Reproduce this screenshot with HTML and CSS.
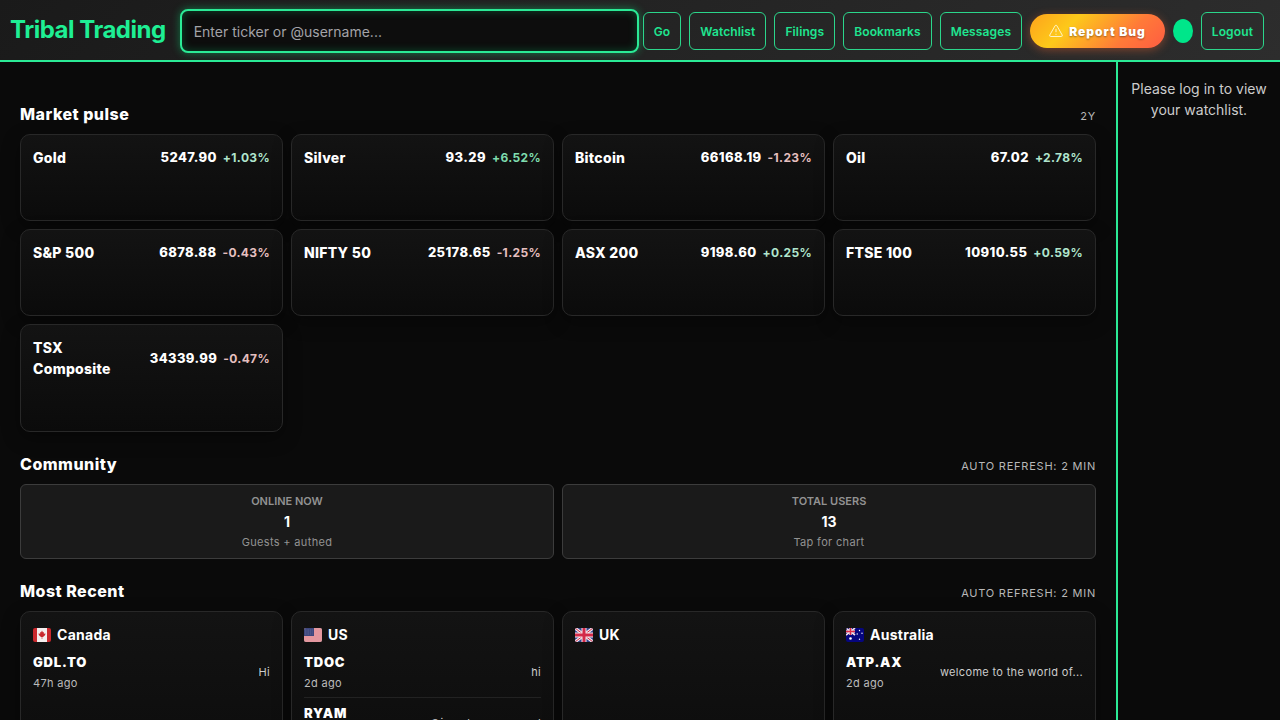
FILE: index.html
```html
<!DOCTYPE html>
<html lang="en">
<head>
  <meta charset="UTF-8">
  <meta name="viewport" content="width=device-width, initial-scale=1.0">
  <title>Tribal Trading</title>
  <link rel="stylesheet" href="styles.css">
</head>
<body>
  <header class="topbar">
    <h1 class="logo">Tribal Trading</h1>
    <form class="search">
      <input type="text" class="search-input" aria-label="Search" placeholder="Enter ticker or @username...">
      <button type="submit" class="btn">Go</button>
    </form>
    <nav class="nav">
      <button type="button" class="btn">Watchlist</button>
      <button type="button" class="btn">Filings</button>
      <button type="button" class="btn">Bookmarks</button>
      <button type="button" class="btn">Messages</button>
      <button type="button" class="btn-bug">
        <svg class="bug-icon" viewBox="0 0 14 14" aria-hidden="true">
          <path d="M6.2 1.6 Q7 .5 7.8 1.6 L13.2 11 Q13.7 12.5 12.3 12.5 H1.7 Q.3 12.5 .8 11 Z M7 4.8 V8.2 M7 9.8 V10.8"/>
        </svg>
        Report Bug
      </button>
      <button type="button" class="avatar" aria-label="Profile"></button>
      <button type="button" class="btn">Logout</button>
    </nav>
  </header>

  <div class="layout">
    <main class="main">
      <section class="section">
        <div class="section-head">
          <h2>Market pulse</h2>
          <span class="meta">2Y</span>
        </div>
        <div class="grid">
          <div class="card"><div class="quote"><span class="name">Gold</span><span class="price">5247.90</span><span class="change up">+1.03%</span></div><div class="spark"></div></div>
          <div class="card"><div class="quote"><span class="name">Silver</span><span class="price">93.29</span><span class="change up-strong">+6.52%</span></div><div class="spark"></div></div>
          <div class="card"><div class="quote"><span class="name">Bitcoin</span><span class="price">66168.19</span><span class="change down">-1.23%</span></div><div class="spark"></div></div>
          <div class="card"><div class="quote"><span class="name">Oil</span><span class="price">67.02</span><span class="change up">+2.78%</span></div><div class="spark"></div></div>
          <div class="card"><div class="quote"><span class="name">S&amp;P 500</span><span class="price">6878.88</span><span class="change down">-0.43%</span></div><div class="spark"></div></div>
          <div class="card"><div class="quote"><span class="name">NIFTY 50</span><span class="price">25178.65</span><span class="change down">-1.25%</span></div><div class="spark"></div></div>
          <div class="card"><div class="quote"><span class="name">ASX 200</span><span class="price">9198.60</span><span class="change up">+0.25%</span></div><div class="spark"></div></div>
          <div class="card"><div class="quote"><span class="name">FTSE 100</span><span class="price">10910.55</span><span class="change up">+0.59%</span></div><div class="spark"></div></div>
          <div class="card"><div class="quote"><span class="name">TSX<br>Composite</span><span class="price">34339.99</span><span class="change down">-0.47%</span></div><div class="spark"></div></div>
        </div>
      </section>

      <section class="section">
        <div class="section-head">
          <h2>Community</h2>
          <span class="meta">AUTO REFRESH: 2 MIN</span>
        </div>
        <div class="stats">
          <button type="button" class="stat">
            <span class="stat-label">ONLINE NOW</span>
            <span class="stat-value">1</span>
            <span class="stat-note">Guests + authed</span>
          </button>
          <button type="button" class="stat">
            <span class="stat-label">TOTAL USERS</span>
            <span class="stat-value">13</span>
            <span class="stat-note">Tap for chart</span>
          </button>
        </div>
      </section>

      <section class="section">
        <div class="section-head">
          <h2>Most Recent</h2>
          <span class="meta">AUTO REFRESH: 2 MIN</span>
        </div>
        <div class="grid">
          <div class="card recent">
            <h3 class="country">
              <svg class="flag" viewBox="0 0 18 14" aria-hidden="true">
                <rect width="18" height="14" fill="#c9282d"/>
                <rect x="4" width="10" height="14" fill="#f4eeee"/>
                <path d="M9 2.5 L10 4.4 L11 4 L10.8 5.8 L12.6 5.6 L12 7.2 L10 9 H9.3 V11 H8.7 V9 H8 L6 7.2 L5.4 5.6 L7.2 5.8 L7 4 L8 4.4 Z" fill="#c9282d"/>
              </svg>
              Canada
            </h3>
            <div class="post">
              <div><div class="ticker">GDL.TO</div><div class="time">47h ago</div></div>
              <p class="message">Hi</p>
            </div>
          </div>
          <div class="card recent">
            <h3 class="country">
              <svg class="flag" viewBox="0 0 18 14" aria-hidden="true">
                <rect width="18" height="14" fill="#f2dfe2"/>
                <path d="M0 1 H18 M0 3 H18 M0 5 H18 M0 7 H18 M0 9 H18 M0 11 H18 M0 13 H18" stroke="#d5505d"/>
                <rect width="10" height="8" fill="#3c467d"/>
                <path d="M1 2 H9 M1 4 H9 M1 6 H9" stroke="#8d94b8" stroke-width=".6" stroke-dasharray=".7 1"/>
              </svg>
              US
            </h3>
            <div class="post">
              <div><div class="ticker">TDOC</div><div class="time">2d ago</div></div>
              <p class="message">hi</p>
            </div>
            <div class="post">
              <div><div class="ticker">RYAM</div><div class="time">2d ago</div></div>
              <p class="message">@jean keeps on and</p>
            </div>
          </div>
          <div class="card recent">
            <h3 class="country">
              <svg class="flag" viewBox="0 0 18 14" aria-hidden="true">
                <rect width="18" height="14" fill="#33438c"/>
                <path d="M0 0 L18 14 M18 0 L0 14" stroke="#f5e6ea" stroke-width="3"/>
                <path d="M0 0 L18 14 M18 0 L0 14" stroke="#d32b49"/>
                <path d="M9 0 V14 M0 7 H18" stroke="#f5e6ea" stroke-width="5"/>
                <path d="M9 0 V14 M0 7 H18" stroke="#d32b49" stroke-width="3"/>
              </svg>
              UK
            </h3>
          </div>
          <div class="card recent">
            <h3 class="country">
              <svg class="flag" viewBox="0 0 18 14" aria-hidden="true">
                <rect width="18" height="14" fill="#06067f"/>
                <path d="M0 0 L9 7 M9 0 L0 7" stroke="#f3dfe7" stroke-width="1.6"/>
                <path d="M4.5 0 V7 M0 3.5 H9" stroke="#f3dfe7" stroke-width="2.6"/>
                <path d="M4.5 0 V7 M0 3.5 H9" stroke="#dc2c47" stroke-width="1.4"/>
                <g fill="#fff">
                  <circle cx="4.5" cy="10.5" r="1.3"/>
                  <circle cx="13.5" cy="2.5" r=".7"/>
                  <circle cx="11.2" cy="6" r=".7"/>
                  <circle cx="16" cy="5.2" r=".7"/>
                  <circle cx="13.5" cy="11.3" r=".7"/>
                </g>
              </svg>
              Australia
            </h3>
            <div class="post">
              <div><div class="ticker">ATP.AX</div><div class="time">2d ago</div></div>
              <p class="message">welcome to the world of...</p>
            </div>
          </div>
        </div>
      </section>
    </main>

    <aside class="sidebar">
      <p>Please log in to view your watchlist.</p>
    </aside>
  </div>
</body>
</html>
```

FILE: styles.css
```css
* {
  box-sizing: border-box;
  margin: 0;
  padding: 0;
}

body {
  display: flex;
  flex-direction: column;
  height: 100vh;
  overflow: hidden;
  background: #0a0a0a;
  color: #fff;
  font-family: Inter, "Liberation Sans", sans-serif;
  font-size: 14px;
  line-height: 21px;
}

button {
  font-family: inherit;
  cursor: pointer;
}

/* header */
.topbar {
  display: flex;
  align-items: center;
  flex-shrink: 0;
  height: 62px;
  padding: 2px 16px 0 10px;
  border-bottom: 2px solid #2bea96;
  background: linear-gradient(135deg, #1a1a1a, #2d2d2d);
}

.logo {
  margin-right: 14px;
  padding-bottom: 2px;
  color: #1eef94;
  font-size: 24px;
  font-weight: 700;
  line-height: 36px;
  letter-spacing: -0.02em;
  white-space: nowrap;
}

.search {
  display: flex;
  flex: 1;
  align-items: center;
  gap: 4px;
  margin-right: 8px;
}

.search-input {
  flex: 1;
  min-width: 0;
  height: 44px;
  padding: 0 12px;
  border: 2px solid #2bea96;
  border-radius: 8px;
  outline: none;
  background: #0d0d0d;
  box-shadow: 0 0 8px rgba(0, 255, 136, 0.4), inset 0 0 8px rgba(0, 255, 136, 0.25);
  color: #fff;
  font-family: inherit;
  font-size: 14px;
}

.search-input::placeholder {
  color: #a3a3a8;
}

.nav {
  display: flex;
  align-items: center;
  gap: 8px;
}

.btn {
  height: 38px;
  padding: 0 10px;
  border: 1px solid #2bd68b;
  border-radius: 6px;
  background: transparent;
  color: #1fe590;
  font-size: 12px;
  font-weight: 600;
  letter-spacing: 0.01em;
  white-space: nowrap;
}

.btn-bug {
  display: flex;
  align-items: center;
  gap: 6px;
  height: 34px;
  padding: 0 19px;
  border: 0;
  border-radius: 17px;
  background: linear-gradient(135deg, #fda21c, #fdc91a 30%, #ff7a38 70%, #ff5c42);
  box-shadow: 0 2px 10px rgba(255, 107, 53, 0.4);
  color: #fff;
  font-size: 12px;
  font-weight: 900;
  letter-spacing: 1px;
  text-shadow: 0 1px 2px rgba(0, 0, 0, 0.4);
  white-space: nowrap;
}

.bug-icon {
  width: 14px;
  height: 14px;
  fill: none;
  stroke: #fff3c4;
}

.avatar {
  width: 20px;
  height: 24px;
  border: 0;
  border-radius: 50%;
  background: #00e68a;
}

/* page */
.layout {
  display: flex;
  flex: 1;
  min-height: 0;
}

.main {
  flex: 1;
  min-width: 0;
  padding: 20px;
  overflow-y: auto;
  scrollbar-width: none;
}

.sidebar {
  width: 164px;
  flex-shrink: 0;
  padding: 16px 10px;
  border-left: 2px solid #2bea96;
  color: #ccc;
  text-align: center;
}

.section {
  margin-top: 20px;
}

.section-head {
  display: flex;
  align-items: baseline;
  justify-content: space-between;
  height: 24px;
  margin-bottom: 8px;
}

.section-head h2 {
  font-size: 16px;
  font-weight: 800;
  line-height: 24px;
  letter-spacing: 0.03em;
}

.meta {
  color: #b8b8b8;
  font-size: 11px;
  letter-spacing: 0.07em;
}

.grid {
  display: grid;
  grid-template-columns: repeat(4, 1fr);
  gap: 8px;
}

.card {
  padding: 12px;
  border: 1px solid #282828;
  border-radius: 10px;
  background: linear-gradient(180deg, #131313, #0b0b0b);
  box-shadow: 0 6px 18px rgba(0, 0, 0, 0.35);
}

.quote {
  display: flex;
  align-items: center;
  gap: 6px;
}

.name {
  flex: 1;
  font-weight: 800;
  letter-spacing: 0.02em;
}

.price {
  font-size: 13px;
  font-weight: 800;
  letter-spacing: 0.03em;
}

.change {
  font-size: 12px;
  font-weight: 700;
  letter-spacing: 0.03em;
}

.up {
  color: #b0e5cd;
}

.up-strong {
  color: #7fdcae;
}

.down {
  color: #e5bfbf;
}

.spark {
  height: 40px;
}

/* community */
.stats {
  display: grid;
  grid-template-columns: repeat(2, 1fr);
  gap: 8px;
}

.stat {
  display: flex;
  flex-direction: column;
  align-items: center;
  gap: 2px;
  padding: 8px;
  border: 1px solid #3c3c3c;
  border-radius: 6px;
  background: #1a1a1a;
  color: #fff;
}

.stat-label,
.stat-note {
  color: #929292;
  font-size: 11px;
  line-height: 16px;
}

.stat-label {
  font-weight: 600;
}

.stat-note {
  letter-spacing: 0.03em;
}

.stat-value {
  font-size: 14px;
  font-weight: 700;
  line-height: 21px;
}

/* most recent */
.recent {
  min-height: 180px;
}

.country {
  display: flex;
  align-items: center;
  gap: 6px;
  margin-bottom: 2px;
  font-size: 14px;
  font-weight: 700;
  letter-spacing: 0.02em;
}

.flag {
  width: 18px;
  height: 14px;
  border-radius: 2px;
}

.post {
  display: flex;
  align-items: center;
  justify-content: space-between;
  padding: 6px 0;
}

.post + .post {
  border-top: 1px solid #222;
}

.ticker {
  margin-bottom: 4px;
  font-size: 13px;
  font-weight: 900;
  line-height: 18px;
  letter-spacing: 0.06em;
}

.time {
  color: #bbb;
  font-size: 11px;
  line-height: 16px;
  letter-spacing: 0.03em;
}

.message {
  max-width: 62%;
  overflow: hidden;
  color: #ccc;
  font-size: 11px;
  line-height: 16px;
  letter-spacing: 0.03em;
  text-overflow: ellipsis;
  white-space: nowrap;
}
```
